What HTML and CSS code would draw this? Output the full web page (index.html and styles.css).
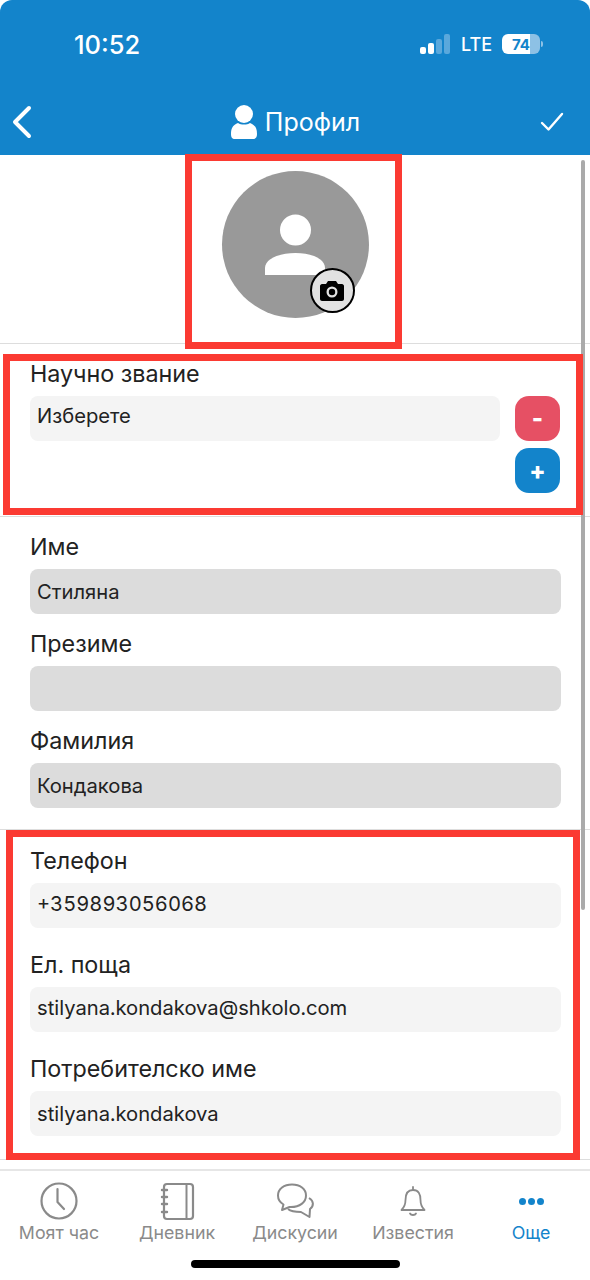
FILE: index.html
```html
<!DOCTYPE html>
<html lang="bg">
<head>
  <meta charset="UTF-8" />
  <meta name="viewport" content="width=device-width, initial-scale=1.0"/>
  <title>Профил</title>
  <link rel="stylesheet" href="styles.css">
</head>
<body>

<!-- Header -->
<header class="header">
  <div class="status-bar">
    <span class="time">10:52</span>
    <div class="status-right">
      <svg class="signal" width="30" height="20" viewBox="0 0 30 20">
        <rect x="0" y="13" width="6" height="7" rx="2" fill="#fff"/>
        <rect x="8" y="9" width="6" height="11" rx="2" fill="#fff"/>
        <rect x="16" y="5" width="6" height="15" rx="2" fill="#5aa8dc"/>
        <rect x="24" y="0" width="6" height="20" rx="2" fill="#5aa8dc"/>
      </svg>
      <span class="lte">LTE</span>
      <div class="battery"><span class="battery-num">74</span></div>
      <span class="battery-tip"></span>
    </div>
  </div>
  <div class="nav-bar">
    <svg class="back" width="20" height="34" viewBox="0 0 20 34">
      <path d="M17 3 L3 17 L17 31" fill="none" stroke="#fff" stroke-width="4" stroke-linecap="round" stroke-linejoin="round"/>
    </svg>
    <div class="nav-title">
      <svg width="28" height="34" viewBox="0 0 28 34">
        <circle cx="14" cy="9" r="9" fill="#fff"/>
        <path d="M1 29 C1 23 3 20 8 18 C11 20 17 20 20 18 C25 20 27 23 27 29 C27 32 26 34 23 34 L5 34 C2 34 1 32 1 29 Z" fill="#fff"/>
      </svg>
      <span>Профил</span>
    </div>
    <svg class="check" width="24" height="20" viewBox="0 0 24 20">
      <path d="M2 11 L8.5 17.5 L22 2" fill="none" stroke="#fff" stroke-width="2.4" stroke-linecap="round" stroke-linejoin="round"/>
    </svg>
  </div>
</header>

<main class="content">
  <section class="avatar-section">
    <div class="avatar">
      <svg width="147" height="147" viewBox="0 0 147 147">
        <circle cx="73.5" cy="59" r="15.5" fill="#fff"/>
        <path d="M43 104 L43 97 C43 88 57 82 73.5 82 C90 82 103 88 103 97 L103 104 Z" fill="#fff"/>
      </svg>
      <div class="camera">
        <svg width="24" height="20" viewBox="0 0 24 20">
          <path d="M2 3 L6 3 L8 0 L16 0 L18 3 L22 3 C23 3 24 4 24 5 L24 18 C24 19 23 20 22 20 L2 20 C1 20 0 19 0 18 L0 5 C0 4 1 3 2 3 Z M12 5.5 A5.5 5.5 0 1 0 12 16.5 A5.5 5.5 0 1 0 12 5.5 Z" fill="#000" fill-rule="evenodd"/>
          <circle cx="12" cy="11" r="3.2" fill="#000"/>
        </svg>
      </div>
    </div>
  </section>

  <section class="section section-title">
    <label class="label">Научно звание</label>
    <div class="title-row">
      <div class="input light">Изберете</div>
      <div class="btn-col">
        <button class="btn btn-red">-</button>
        <button class="btn btn-blue">+</button>
      </div>
    </div>
  </section>

  <section class="section section-names">
    <label class="label">Име</label>
    <div class="input gray">Стиляна</div>
    <label class="label">Презиме</label>
    <div class="input gray"></div>
    <label class="label">Фамилия</label>
    <div class="input gray">Кондакова</div>
  </section>

  <section class="section section-contact">
    <label class="label">Телефон</label>
    <div class="input light raised">+359893056068</div>
    <label class="label">Ел. поща</label>
    <div class="input light raised">stilyana.kondakova@shkolo.com</div>
    <label class="label">Потребителско име</label>
    <div class="input light">stilyana.kondakova</div>
  </section>
</main>

<!-- Tab bar -->
<nav class="tabbar">
  <div class="tab">
    <svg width="40" height="40" viewBox="0 0 40 40">
      <circle cx="20" cy="20" r="17.5" fill="none" stroke="#8a8a8a" stroke-width="2.2"/>
      <path d="M18.5 8 L18.5 21 L25 28" fill="none" stroke="#8a8a8a" stroke-width="2.2" stroke-linecap="round" stroke-linejoin="round"/>
    </svg>
    <span>Моят час</span>
  </div>
  <div class="tab">
    <svg width="40" height="40" viewBox="0 0 40 40">
      <rect x="7" y="3" width="29" height="35" rx="3" fill="none" stroke="#8a8a8a" stroke-width="2.2"/>
      <path d="M29.500 3 L29.500 38" stroke="#8a8a8a" stroke-width="2"/>
      <path d="M5 9 L10 9 M5 16 L10 16 M5 23 L10 23 M5 31 L10 31" stroke="#8a8a8a" stroke-width="2.4" stroke-linecap="round"/>
    </svg>
    <span>Дневник</span>
  </div>
  <div class="tab">
    <svg width="40" height="40" viewBox="0 0 40 40">
      <path d="M17 3.500 C9 3.500 3 8 3 14.500 C3 18.500 5 21.500 8.500 23.500 L7 29 L14.500 26 C25 26.500 31 21 31 14.500 C31 8 25 3.500 17 3.500 Z" fill="none" stroke="#8a8a8a" stroke-width="2" stroke-linejoin="round"/>
      <path d="M34 17 C39 20 39 25 35 28 L34.500 36 L26 31 C22 31 16 30.500 13 28" fill="none" stroke="#8a8a8a" stroke-width="2" stroke-linejoin="round"/>
    </svg>
    <span>Дискусии</span>
  </div>
  <div class="tab">
    <svg width="40" height="40" viewBox="0 0 40 40">
      <path d="M20 9 C14.500 9 12.500 13 12.500 19 C12.500 24 11 26.500 8.500 29 L31.500 29 C29 26.500 27.500 24 27.500 19 C27.500 13 25.500 9 20 9 Z" fill="none" stroke="#8a8a8a" stroke-width="1.8" stroke-linejoin="round"/>
      <path d="M20 6 L20 9 M17 32.500 C18 34.500 22 34.500 23 32.500" fill="none" stroke="#8a8a8a" stroke-width="1.8" stroke-linecap="round"/>
    </svg>
    <span>Известия</span>
  </div>
  <div class="tab tab-active">
    <div class="dots"><i></i><i></i><i></i></div>
    <span>Още</span>
  </div>
  <div class="home-bar"></div>
</nav>

<!-- Scrollbar and the red marks drawn over the screenshot -->
<div class="scrollbar"></div>
<div class="mark mark-avatar"></div>
<div class="mark mark-title"></div>
<div class="mark mark-contact"></div>

</body>
</html>
```

FILE: styles.css
```css
* {
  box-sizing: border-box;
}

body {
  margin: 0;
  width: 590px;
  height: 1280px;
  position: relative;
  overflow: hidden;
  display: flex;
  flex-direction: column;
  background: #fff;
  color: #222;
  font-family: Inter, "Liberation Sans", sans-serif;
}

/* Header */
.header {
  height: 155px;
  flex: none;
  background: #1384cb;
  border-radius: 12px 12px 0 0;
  color: #fff;
}

.status-bar {
  height: 88px;
  display: flex;
  justify-content: space-between;
  align-items: center;
  padding: 0 47px 0 74px;
}

.time {
  font-size: 25.5px;
  font-weight: 500;
}

.status-right {
  display: flex;
  align-items: center;
}

.lte {
  width: 30px;
  font-size: 18px;
  font-weight: 500;
  margin: 0 11px;
  white-space: nowrap;
}

.battery {
  width: 38px;
  height: 20px;
  border-radius: 6px;
  background: linear-gradient(90deg, #fff 74%, #8dc1e5 74%);
  display: flex;
  align-items: center;
  justify-content: center;
}

.battery-num {
  font-size: 15px;
  font-weight: 700;
  color: #1384cb;
}

.battery-tip {
  width: 2px;
  height: 6px;
  margin-left: 1px;
  border-radius: 0 2px 2px 0;
  background: #8dc1e5;
}

.nav-bar {
  height: 67px;
  display: flex;
  justify-content: space-between;
  align-items: center;
  padding: 0 26px 0 12px;
}

.nav-title {
  display: flex;
  align-items: center;
  gap: 7px;
  font-size: 25px;
  margin-left: 18px;
}

/* Sections */
.content {
  flex: 1;
}

.avatar-section {
  height: 189px;
  padding-top: 16px;
  display: flex;
  justify-content: center;
  border-bottom: 1px solid #ddd;
}

.avatar {
  position: relative;
  width: 147px;
  height: 147px;
  border-radius: 50%;
  background: #999;
}

.camera {
  position: absolute;
  left: 88px;
  top: 97px;
  width: 45px;
  height: 45px;
  border-radius: 50%;
  border: 2px solid #000;
  background: #e2e2e2;
  display: flex;
  align-items: center;
  justify-content: center;
}

.section {
  padding: 15px 29px 0 30px;
  border-bottom: 1px solid #ddd;
}

.section-title {
  height: 173px;
  padding-right: 30px;
}

.section-names {
  height: 313px;
}

.section-contact {
  height: 330px;
  padding-top: 16px;
}

.label {
  display: block;
  height: 30px;
  line-height: 30px;
  margin-bottom: 7px;
  font-size: 23.3px;
}

.input {
  height: 45px;
  line-height: 45px;
  padding: 0 7px;
  border-radius: 8px;
  font-size: 20.2px;
  font-variant-numeric: tabular-nums;
  margin-bottom: 15px;
}

.section-contact .input {
  margin-bottom: 22px;
}

.raised {
  line-height: 41px;
}

.light {
  background: #f4f4f4;
}

.gray {
  background: #dcdcdc;
}

.title-row {
  display: flex;
  gap: 15px;
}

.title-row .input {
  flex: 1;
  margin: 0;
  line-height: 39px;
}

.btn-col {
  display: flex;
  flex-direction: column;
  gap: 7px;
}

.btn {
  width: 45px;
  height: 45px;
  padding: 0;
  border: none;
  border-radius: 14px;
  color: #fff;
  font-family: inherit;
  font-size: 24px;
  font-weight: 800;
}

.btn-red {
  background: #e65064;
}

.btn-blue {
  background: #1384cb;
}

/* Tab bar */
.tabbar {
  position: relative;
  height: 111px;
  flex: none;
  display: grid;
  grid-template-columns: repeat(5, 118px);
  align-content: start;
  border-top: 2px solid #e6e6e6;
  padding-top: 10px;
}

.tab {
  display: flex;
  flex-direction: column;
  align-items: center;
  gap: 1px;
  font-size: 17.8px;
  color: #8a8a8a;
}

.tab-active {
  color: #1384cb;
}

.dots {
  height: 40px;
  display: flex;
  align-items: center;
  gap: 2px;
}

.dots i {
  width: 7px;
  height: 7px;
  border-radius: 50%;
  background: #1384cb;
}

.home-bar {
  position: absolute;
  left: 191px;
  top: 89px;
  width: 209px;
  height: 8px;
  border-radius: 4px;
  background: #000;
}

/* Things lying on top of the page */
.scrollbar {
  position: absolute;
  left: 581px;
  top: 160px;
  width: 4px;
  height: 750px;
  border-radius: 2px;
  background: #aaa;
}

.mark {
  position: absolute;
  border: 7px solid #fb3a32;
}

.mark-avatar {
  left: 185px;
  top: 154px;
  width: 217px;
  height: 195px;
}

.mark-title {
  left: 3px;
  top: 354px;
  width: 580px;
  height: 161px;
}

.mark-contact {
  left: 6px;
  top: 830px;
  width: 574px;
  height: 330px;
}
```
